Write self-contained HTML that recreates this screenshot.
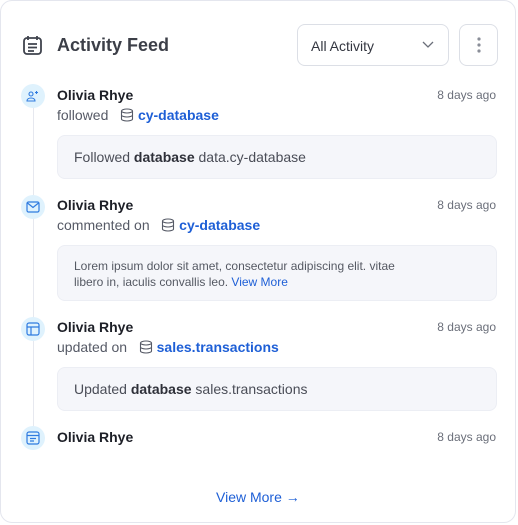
<!DOCTYPE html><html><head><style>
*{margin:0;padding:0;box-sizing:border-box}
body{width:518px;height:525px;background:#fff;font-family:"Liberation Sans",sans-serif;position:relative;overflow:hidden}
.card{position:absolute;left:0;top:0;width:516px;height:523px;border:1px solid #e4e6ee;border-radius:12px}
.a{position:absolute}
.av{position:absolute;left:21px;width:24px;height:24px;border-radius:50%;background:#dff2fd;display:flex;align-items:center;justify-content:center}
.name{position:absolute;left:57px;font-size:14px;font-weight:bold;color:#1d1f27;line-height:16px}
.time{position:absolute;right:22px;font-size:12px;color:#6b6f7a;line-height:14px}
.act{position:absolute;left:57px;font-size:14px;color:#565a66;line-height:16px;display:flex;align-items:center}
.act b{color:#1e5fd6;font-weight:bold}
.box{position:absolute;left:57px;width:440px;background:#f5f6fa;border:1px solid #eceef4;border-radius:8px;color:#4a4d57;font-size:14px;padding-left:16px}
.box strong{color:#2e3039}
</style></head><body>
<div class="card"></div>
<svg class="a" style="left:23px;top:35px" width="19" height="20" viewBox="0 0 19 20" fill="none" stroke="#3f434d" stroke-width="1.8"><rect x="1" y="3" width="17" height="16" rx="3"/><path d="M5 1v4M14 1v4M5 9h9M5 12.5h9M5 16h6"/></svg>
<div class="a" style="left:57px;top:35px;font-size:18px;font-weight:bold;color:#3c3f48;line-height:21px">Activity Feed</div>
<div class="a" style="left:297px;top:24px;width:152px;height:42px;border:1px solid #dcdfe6;border-radius:8px;font-size:14px;color:#333640;padding:13px 0 0 13px">All Activity</div>
<svg class="a" style="left:421px;top:40px" width="14" height="9" viewBox="0 0 14 9" fill="none" stroke="#6b6f7a" stroke-width="1.3"><path d="M2 2l5 5 5-5"/></svg>
<div class="a" style="left:459px;top:24px;width:39px;height:42px;border:1px solid #dcdfe6;border-radius:8px"></div>
<svg class="a" style="left:476px;top:36px" width="6" height="18"><circle cx="3" cy="3" r="1.6" fill="#8a8e98"/><circle cx="3" cy="9" r="1.6" fill="#8a8e98"/><circle cx="3" cy="15" r="1.6" fill="#8a8e98"/></svg>
<div class="a" style="left:33px;top:106px;width:1px;height:325px;background:#e6e8ef"></div>

<div class="av" style="top:84px"><svg width="14" height="14" viewBox="0 0 14 14" fill="none" stroke="#2f7be0" stroke-width="1.1"><circle cx="5" cy="5" r="2"/><path d="M1 12c0-2 2-3 4-3s4 1 4 3z"/><path d="M10.5 2v3M9 3.5h3"/></svg></div>
<div class="name" style="top:87px">Olivia Rhye</div><div class="time" style="top:88px">8 days ago</div>
<div class="act" style="top:107px">followed&nbsp;&nbsp;&nbsp;<svg width="14" height="14" viewBox="0 0 14 14" fill="none" stroke="#565a66" stroke-width="1.1"><ellipse cx="7" cy="3" rx="5.5" ry="2"/><path d="M1.5 3v8c0 1.1 2.5 2 5.5 2s5.5-.9 5.5-2V3M1.5 7c0 1.1 2.5 2 5.5 2s5.5-.9 5.5-2"/></svg>&nbsp;<b>cy-database</b></div>
<div class="box" style="top:135px;height:44px;line-height:42px">Followed <strong>database</strong> data.cy-database</div>

<div class="av" style="top:195px"><svg width="14" height="12" viewBox="0 0 14 12" fill="none" stroke="#2f7be0" stroke-width="1.2"><rect x="1" y="1" width="12" height="10" rx="1.5"/><path d="M1.5 2l5.5 4.5 5.5-4.5"/></svg></div>
<div class="name" style="top:197px">Olivia Rhye</div><div class="time" style="top:198px">8 days ago</div>
<div class="act" style="top:217px">commented on&nbsp;&nbsp;&nbsp;<svg width="14" height="14" viewBox="0 0 14 14" fill="none" stroke="#565a66" stroke-width="1.1"><ellipse cx="7" cy="3" rx="5.5" ry="2"/><path d="M1.5 3v8c0 1.1 2.5 2 5.5 2s5.5-.9 5.5-2V3M1.5 7c0 1.1 2.5 2 5.5 2s5.5-.9 5.5-2"/></svg>&nbsp;<b>cy-database</b></div>
<div class="box" style="top:245px;height:56px;font-size:12px;line-height:16px;color:#555963;padding-top:12px">Lorem ipsum dolor sit amet, consectetur adipiscing elit. vitae<br>libero in, iaculis convallis leo. <span style="color:#1e5fd6">View More</span></div>

<div class="av" style="top:317px"><svg width="14" height="14" viewBox="0 0 14 14" fill="none" stroke="#2f7be0" stroke-width="1.2"><rect x="1" y="1" width="12" height="12" rx="2"/><path d="M1 5h12M5 5v8"/></svg></div>
<div class="name" style="top:319px">Olivia Rhye</div><div class="time" style="top:320px">8 days ago</div>
<div class="act" style="top:339px">updated on&nbsp;&nbsp;&nbsp;<svg width="14" height="14" viewBox="0 0 14 14" fill="none" stroke="#565a66" stroke-width="1.1"><ellipse cx="7" cy="3" rx="5.5" ry="2"/><path d="M1.5 3v8c0 1.1 2.5 2 5.5 2s5.5-.9 5.5-2V3M1.5 7c0 1.1 2.5 2 5.5 2s5.5-.9 5.5-2"/></svg>&nbsp;<b>sales.transactions</b></div>
<div class="box" style="top:367px;height:44px;line-height:42px">Updated <strong>database</strong> sales.transactions</div>

<div class="av" style="top:426px"><svg width="14" height="14" viewBox="0 0 14 14" fill="none" stroke="#2f7be0" stroke-width="1.2"><rect x="1" y="1" width="12" height="12" rx="2"/><path d="M1 4.5h12M4 7.5h6M4 10h4"/></svg></div>
<div class="name" style="top:429px">Olivia Rhye</div><div class="time" style="top:430px">8 days ago</div>

<div class="a" style="left:216px;top:489px;font-size:14px;color:#1e5fd6;line-height:16px">View More →</div>
</body></html>
